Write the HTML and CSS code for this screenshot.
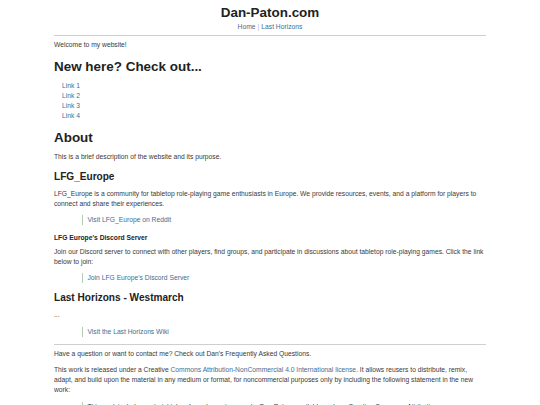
FILE: index.html
```html
<!DOCTYPE html>
<html lang="en">
<head>
<meta charset="utf-8">
<title>Dan-Paton.com</title>
<link rel="stylesheet" href="styles.css">
</head>
<body>
<div class="page">
  <header class="site-header">
    <h1 class="site-title">Dan-Paton.com</h1>
    <nav class="site-nav"><a href="#">Home</a><span class="sep">|</span><a href="#">Last Horizons</a></nav>
  </header>
  <hr class="rule">
  <main>
    <p class="first">Welcome to my website!</p>
    <h2>New here? Check out...</h2>
    <ul class="links">
      <li><a href="#">Link 1</a></li>
      <li><a href="#">Link 2</a></li>
      <li><a href="#">Link 3</a></li>
      <li><a href="#">Link 4</a></li>
    </ul>
    <h2>About</h2>
    <p class="after-h2">This is a brief description of the website and its purpose.</p>
    <h3>LFG_Europe</h3>
    <p>LFG_Europe is a community for tabletop role-playing game enthusiasts in Europe. We provide resources, events, and a platform for players to connect and share their experiences.</p>
    <blockquote><a href="#">Visit LFG_Europe on Reddit</a></blockquote>
    <h4>LFG Europe's Discord Server</h4>
    <p class="after-h4">Join our Discord server to connect with other players, find groups, and participate in discussions about tabletop role-playing games. Click the link below to join:</p>
    <blockquote><a href="#">Join LFG Europe's Discord Server</a></blockquote>
    <h3 class="h3-lh">Last Horizons - Westmarch</h3>
    <p>...</p>
    <blockquote><a href="#">Visit the Last Horizons Wiki</a></blockquote>
  </main>
  <hr class="rule footer-rule">
  <footer>
    <p class="after-hr">Have a question or want to contact me? Check out Dan's Frequently Asked Questions.</p>
    <p>This work is released under a Creative <a href="#">Commons Attribution-NonCommercial 4.0 International license</a>. It allows reusers to distribute, remix, adapt, and build upon the material in any medium or format, for noncommercial purposes only by including the following statement in the new work:</p>
    <blockquote class="quote-text">This work includes material taken from dan-paton.com by Dan Paton, available under a Creative Commons Attribution-NonCommercial 4.0 International license.</blockquote>
  </footer>
</div>
</body>
</html>
```
FILE: styles.css
```css
html, body {
  margin: 0;
  padding: 0;
  background: #ffffff;
}
body {
  font-family: "Liberation Sans", Arial, sans-serif;
  font-size: 6.72px;
  line-height: 10px;
  color: #3a3a3a;
}
.page {
  width: 432px;
  margin: 0 auto;
}
a {
  color: #3f6d92;
  text-decoration: none;
}
.site-header {
  text-align: center;
  padding-top: 4.5px;
}
.site-title {
  margin: 0;
  font-size: 13.44px;
  line-height: 15px;
  font-weight: bold;
  color: #222222;
}
.site-nav {
  margin-top: 2px;
  line-height: 10px;
}
.sep {
  color: #bbbbbb;
  margin: 0 2px;
}
.rule {
  border: 0;
  border-top: 1px solid #cfcfcf;
  margin: 3.5px 0 0;
  height: 0;
}
p {
  margin: 6px 0 0;
}
p.first {
  margin-top: 3.5px;
}
p.after-h2 {
  margin-top: 7px;
}
p.after-h4 {
  margin-top: 4px;
}
p.after-hr {
  margin-top: 4px;
}
h2 {
  margin: 9.5px 0 0;
  font-size: 13.44px;
  line-height: 15px;
  color: #222222;
}
h3 {
  margin: 8.5px 0 0;
  font-size: 10.08px;
  line-height: 12px;
  color: #222222;
}
h3.h3-lh {
  margin-top: 9px;
}
h4 {
  margin: 7.5px 0 0;
  font-size: 6.72px;
  line-height: 10px;
  color: #222222;
}
.links {
  list-style: none;
  margin: 6.5px 0 0;
  padding-left: 8px;
}
blockquote {
  margin: 6.5px 0 0 27.5px;
  padding-left: 5px;
  border-left: 1.5px solid #b3cfb3;
}
.footer-rule {
  margin-top: 7.5px;
}
```
